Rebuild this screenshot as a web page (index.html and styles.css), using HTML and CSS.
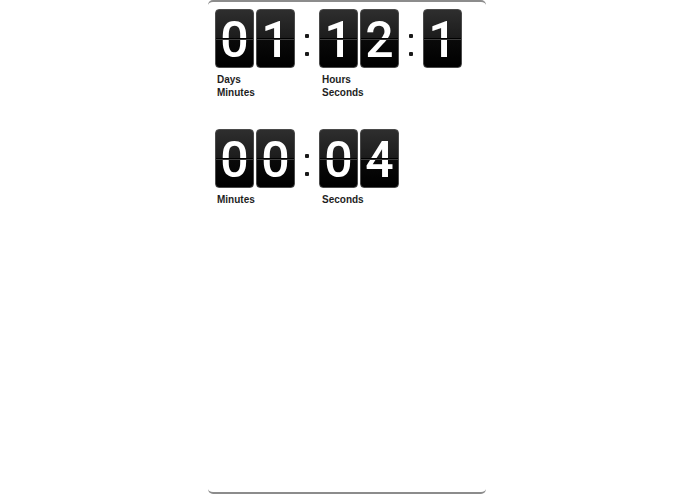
FILE: index.html
```html
<!DOCTYPE html>
<html>
<head>
<meta charset="utf-8">
<link rel="stylesheet" href="styles.css">
</head>
<body>
<div class="panel">
  <div class="timer">
    <div class="cards">
      <div class="group">
        <div class="card">0</div>
        <div class="card">1</div>
      </div>
      <div class="colon"><span class="dot"></span><span class="dot"></span></div>
      <div class="group">
        <div class="card">1</div>
        <div class="card">2</div>
      </div>
      <div class="colon"><span class="dot"></span><span class="dot"></span></div>
      <div class="group">
        <div class="card">1</div>
      </div>
    </div>
    <div class="labels">
      <div class="label-col">Days<br>Minutes</div>
      <div class="label-col">Hours<br>Seconds</div>
    </div>
  </div>

  <div class="timer second">
    <div class="cards">
      <div class="group">
        <div class="card">0</div>
        <div class="card">0</div>
      </div>
      <div class="colon"><span class="dot"></span><span class="dot"></span></div>
      <div class="group">
        <div class="card">0</div>
        <div class="card">4</div>
      </div>
    </div>
    <div class="labels">
      <div class="label-col">Minutes</div>
      <div class="label-col">Seconds</div>
    </div>
  </div>
</div>
</body>
</html>
```
FILE: styles.css
```css
html, body {
  margin: 0;
  padding: 0;
  background: #ffffff;
}

.panel {
  margin-left: 208px;
  width: 278px;
  height: 494px;
  box-sizing: border-box;
  border-top: 2px solid #8c8c8c;
  border-bottom: 2px solid #8c8c8c;
  border-radius: 5px;
  padding: 7px 0 0 7px;
  background: #fff;
}

.timer {
  display: flex;
  flex-direction: column;
}

.second {
  margin-top: 30px;
}

.cards {
  display: flex;
  align-items: flex-start;
}

.group {
  display: flex;
  gap: 2px;
}

.card {
  width: 39px;
  height: 59px;
  box-sizing: border-box;
  border-radius: 4px;
  border: 1px solid #4a4a4a;
  background: linear-gradient(#2e2e2e 0%, #1c1c1c 49%, #0a0a0a 51%, #000 100%);
  color: #fff;
  font-family: Roboto, "Liberation Sans", Arial, sans-serif;
  font-weight: 500;
  font-size: 50px;
  line-height: 61px;
  text-align: center;
  overflow: hidden;
  position: relative;
}

.card::after {
  content: "";
  position: absolute;
  left: 0;
  right: 0;
  top: 28px;
  height: 1px;
  background: #000;
  box-shadow: 0 1px 0 #3d3d3d;
}

.colon {
  width: 24px;
  height: 59px;
  display: flex;
  flex-direction: column;
  align-items: center;
  padding-top: 25px;
  box-sizing: border-box;
  gap: 14px;
}

.dot {
  width: 4px;
  height: 4px;
  border-radius: 1px;
  background: #1a1a1a;
}

.labels {
  display: flex;
  margin-top: 5px;
  font-family: "Liberation Sans", Arial, sans-serif;
  font-weight: bold;
  font-size: 10px;
  line-height: 13px;
  color: #1e1e1e;
}

.label-col {
  width: 103px;
  padding-left: 2px;
}
```
